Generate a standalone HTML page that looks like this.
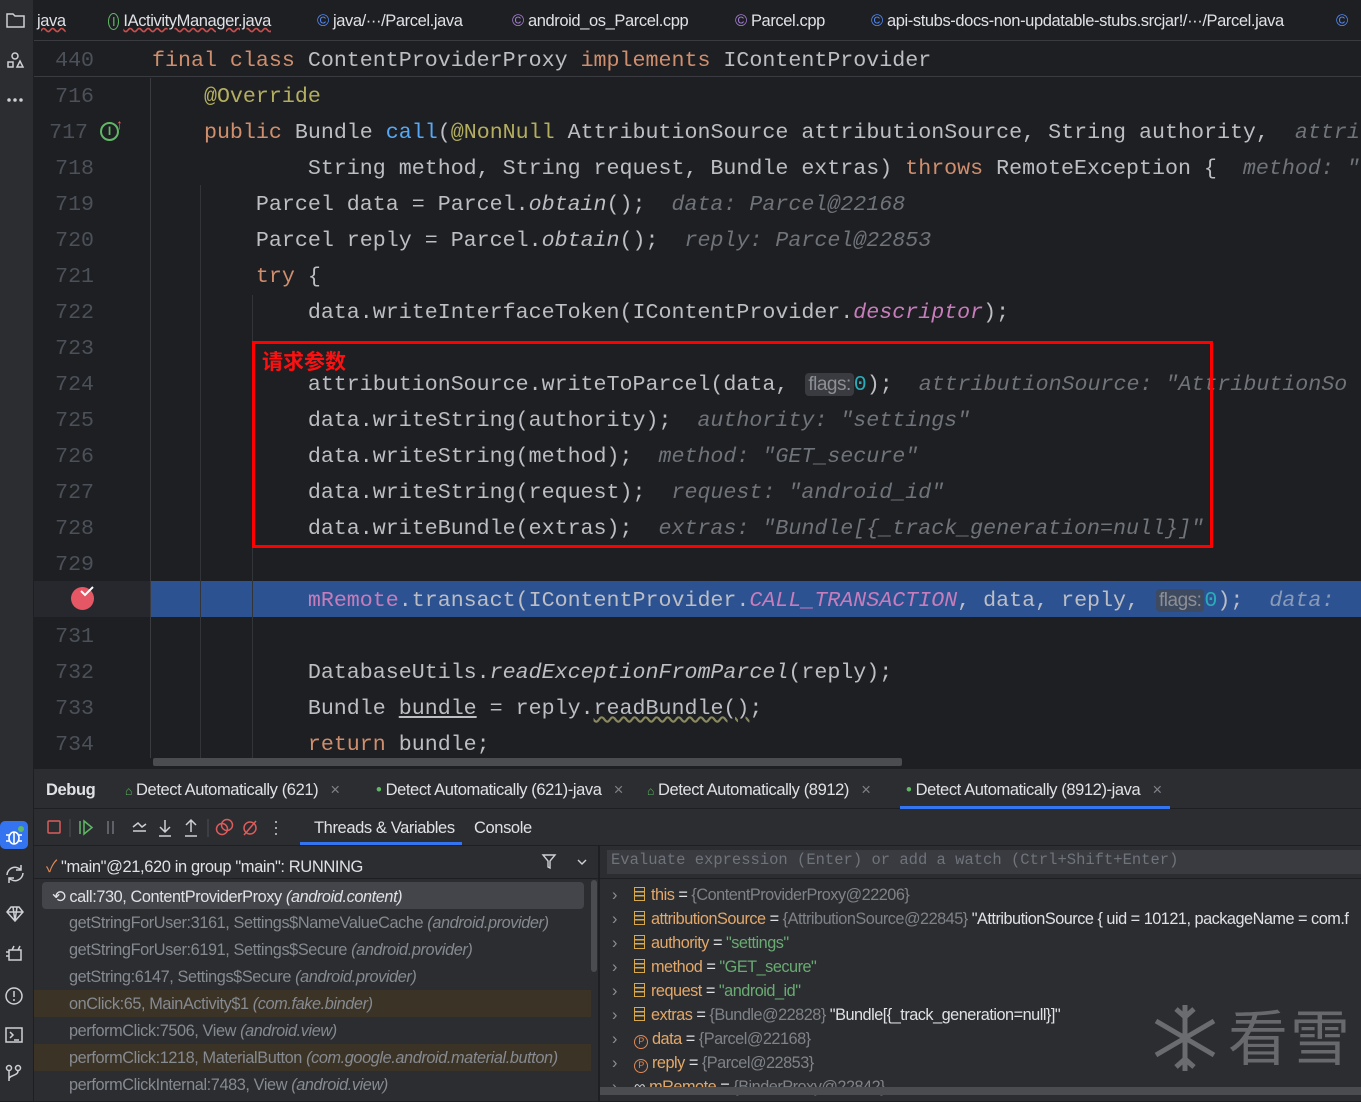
<!DOCTYPE html>
<html><head><meta charset="utf-8"><style>
*{margin:0;padding:0;box-sizing:border-box}
body{width:1361px;height:1101px;background:#1e1f22;overflow:hidden;position:relative;font-family:"Liberation Sans","Noto Sans CJK SC",sans-serif;color:#dfe1e5}
.abs{position:absolute}
.side{left:0;top:0;width:34px;height:1101px;background:#2b2d30;border-right:1px solid #1e1f22}
.tabs{left:34px;top:0;width:1327px;height:41px;background:#1e1f22;border-bottom:1px solid #393b40;font-size:16.5px;letter-spacing:-0.4px;color:#dfe1e5;white-space:nowrap}
.tabs span{position:absolute;top:12px}
.code{font-family:"Liberation Mono",monospace;font-size:21.65px;white-space:pre;color:#bcbec4}
.ln{position:absolute;left:34px;width:60px;text-align:right;font-family:"Liberation Mono",monospace;font-size:21.6px;color:#4b5059;line-height:36px;margin-top:2px}
.cl{position:absolute;left:152px;line-height:36px;height:36px;margin-top:2px}
.k{color:#cf8e6d}.m{color:#56a8f5}.a{color:#b3ae60}.i{font-style:italic}.f{color:#c77dbb}.n{color:#2aacb8}
.h{color:#6f737a;font-style:italic}
.hb{font-family:"Liberation Sans",sans-serif;font-size:19px;background:#393b40;color:#8c8f94;border-radius:4px;padding:1px 3px;letter-spacing:-0.5px;margin-left:4px}
.ui{font-size:16.5px;letter-spacing:-0.4px;white-space:nowrap}
.fr{position:absolute;left:69px;font-size:16.3px;letter-spacing:-0.4px;color:#868a91;white-space:nowrap}
.fr i{color:#868a91}
.vr{position:absolute;left:612px;font-size:16.3px;letter-spacing:-0.5px;white-space:nowrap;color:#dfe1e5}
.vr .nm{color:#e3a869}.vr .g{color:#7f8288}.vr .s{color:#6aab73}.vr .ar{color:#8c8f94;display:inline-block;width:22px}
.ic{display:inline-block;width:11px;height:14px;border:1.5px solid #d8a94a;margin-right:6px;vertical-align:-1px;background:linear-gradient(#d8a94a,#d8a94a) 0 3px/100% 1.5px no-repeat,linear-gradient(#d8a94a,#d8a94a) 0 7px/100% 1.5px no-repeat}
.pi{display:inline-block;width:14px;height:14px;border:1.5px solid #e08855;border-radius:50%;margin-right:4px;font-size:9px;color:#e08855;text-align:center;line-height:11px;vertical-align:0}
</style></head><body>
<div class="abs side"></div>
<svg class="abs" style="left:5px;top:10px" width="22" height="100" viewBox="0 0 22 100" fill="none" stroke="#ced0d6" stroke-width="1.5">
<path d="M2 4h6l2 2h9v11H2z"/>
<circle cx="10" cy="46" r="3"/><rect x="3" y="52" width="5" height="5"/><path d="M12 57l3-6 3 6z"/>
<circle cx="4" cy="90" r="1" fill="#ced0d6"/><circle cx="10" cy="90" r="1" fill="#ced0d6"/><circle cx="16" cy="90" r="1" fill="#ced0d6"/>
</svg>
<div class="abs" style="left:0;top:821px;width:28px;height:28px;background:#3574f0;border-radius:5px"></div>
<svg class="abs" style="left:3px;top:824px" width="24" height="24" viewBox="0 0 24 24" fill="none" stroke="#fff" stroke-width="1.6"><ellipse cx="11" cy="14" rx="5" ry="6"/><path d="M3 11h3M16 11h3M3 17h3M16 17h3M11 8v12"/><circle cx="18" cy="5" r="3" fill="#5fb865" stroke="none"/></svg>
<svg class="abs" style="left:3px;top:862px" width="24" height="240" viewBox="0 0 24 240" fill="none" stroke="#ced0d6" stroke-width="1.5">
<path d="M4 13a8 8 0 0 1 14-5M20 11a8 8 0 0 1-14 5M18 3v5h-5M6 21v-5h5"/>
<path d="M4 50l4-5h8l4 5-8 9zM4 50h16M10 45l2 14 2-14"/>
<path d="M6 88h12v10H6zM3 90h3M3 94h3M9 88l2-4M15 88l2-4"/>
<circle cx="11" cy="134" r="8"/><path d="M11 129v6M11 137v2"/>
<rect x="3" y="166" width="16" height="14"/><path d="M7 170l3 3-3 3M11 178h5"/>
<circle cx="6" cy="206" r="2.5"/><circle cx="15" cy="206" r="2.5"/><path d="M6 209v10M15 209c0 5-9 4-9 8"/>
</svg>

<div class="abs tabs">
<span style="left:3px;text-decoration:underline wavy #c94f4f">java</span>
<span style="left:74px"><span style="position:static;color:#5fb865;font-size:13px;border:1.3px solid #5fb865;border-radius:50%;padding:0 3px">I</span> <span style="position:static;text-decoration:underline wavy #c94f4f">IActivityManager.java</span></span>
<span style="left:283px"><span style="position:static;color:#548af7">©</span> java/···/Parcel.java</span>
<span style="left:478px"><span style="position:static;color:#a57fd6">©</span> android_os_Parcel.cpp</span>
<span style="left:701px"><span style="position:static;color:#a57fd6">©</span> Parcel.cpp</span>
<span style="left:837px"><span style="position:static;color:#548af7">©</span> api-stubs-docs-non-updatable-stubs.srcjar!/···/Parcel.java</span>
<span style="left:1302px;color:#548af7">©</span>
</div>

<div class="abs" style="left:34px;top:41px;width:1327px;height:36px;border-bottom:1px solid #393b40;background:#1e1f22"></div>
<div class="ln" style="top:41px">440</div>
<div class="cl code" style="top:41px"><span class="k">final class</span> ContentProviderProxy <span class="k">implements</span> IContentProvider</div>

<div class="abs" style="left:34px;top:581px;width:116px;height:36px;background:#26282e"></div>
<div class="abs" style="left:150px;top:581px;width:1211px;height:36px;background:#2d5291"></div>
<div class="abs" style="left:150px;top:78px;width:1px;height:680px;background:#393b40"></div>
<div class="abs" style="left:200px;top:185px;width:1px;height:573px;background:#313438"></div>
<div class="abs" style="left:252px;top:295px;width:1px;height:463px;background:#313438"></div>
<div class="abs" style="left:71px;top:587px;width:23px;height:23px;border-radius:50%;background:#e55765"></div>
<svg class="abs" style="left:80px;top:585px" width="14" height="12"><path d="M1 6l4 4 8-8" stroke="#fff" stroke-width="2" fill="none"/></svg>
<div class="abs" style="left:100px;top:122px;width:19px;height:19px;border:2px solid #5fb865;border-radius:50%;color:#5fb865;font-size:12px;text-align:center;line-height:15px;font-weight:bold">I</div>
<div class="abs" style="left:116px;top:116px;color:#e06060;font-size:14px">↑</div>

<div class="ln" style="top:77px">716</div>
<div class="ln" style="top:113px;left:28px">717</div>
<div class="ln" style="top:149px">718</div>
<div class="ln" style="top:185px">719</div>
<div class="ln" style="top:221px">720</div>
<div class="ln" style="top:257px">721</div>
<div class="ln" style="top:293px">722</div>
<div class="ln" style="top:329px">723</div>
<div class="ln" style="top:365px">724</div>
<div class="ln" style="top:401px">725</div>
<div class="ln" style="top:437px">726</div>
<div class="ln" style="top:473px">727</div>
<div class="ln" style="top:509px">728</div>
<div class="ln" style="top:545px">729</div>
<div class="ln" style="top:617px">731</div>
<div class="ln" style="top:653px">732</div>
<div class="ln" style="top:689px">733</div>
<div class="ln" style="top:725px">734</div>

<div class="cl code" style="top:77px">    <span class="a">@Override</span></div>
<div class="cl code" style="top:113px">    <span class="k">public</span> Bundle <span class="m">call</span>(<span class="a">@NonNull</span> AttributionSource attributionSource, String authority,  <span class="h">attri</span></div>
<div class="cl code" style="top:149px">            String method, String request, Bundle extras) <span class="k">throws</span> RemoteException {  <span class="h">method: "</span></div>
<div class="cl code" style="top:185px">        Parcel data = Parcel.<span class="i">obtain</span>();  <span class="h">data: Parcel@22168</span></div>
<div class="cl code" style="top:221px">        Parcel reply = Parcel.<span class="i">obtain</span>();  <span class="h">reply: Parcel@22853</span></div>
<div class="cl code" style="top:257px">        <span class="k">try</span> {</div>
<div class="cl code" style="top:293px">            data.writeInterfaceToken(IContentProvider.<span class="f i">descriptor</span>);</div>
<div class="cl code" style="top:365px">            attributionSource.writeToParcel(data, <span class="hb">flags:</span><span class="n">0</span>);  <span class="h">attributionSource: "AttributionSo</span></div>
<div class="cl code" style="top:401px">            data.writeString(authority);  <span class="h">authority: "settings"</span></div>
<div class="cl code" style="top:437px">            data.writeString(method);  <span class="h">method: "GET_secure"</span></div>
<div class="cl code" style="top:473px">            data.writeString(request);  <span class="h">request: "android_id"</span></div>
<div class="cl code" style="top:509px">            data.writeBundle(extras);  <span class="h">extras: "Bundle[{_track_generation=null}]"</span></div>
<div class="cl code" style="top:581px">            <span class="f">mRemote</span>.transact(IContentProvider.<span class="f i">CALL_TRANSACTION</span>, data, reply, <span class="hb" style="background:#3d4a60">flags:</span><span class="n">0</span>);  <span class="h" style="color:#8a9bb8">data: </span></div>
<div class="cl code" style="top:653px">            DatabaseUtils.<span class="i">readExceptionFromParcel</span>(reply);</div>
<div class="cl code" style="top:689px">            Bundle <span style="text-decoration:underline">bundle</span> = reply.<span style="text-decoration:underline wavy #8a8a60">readBundle()</span>;</div>
<div class="cl code" style="top:725px">            <span class="k">return</span> bundle;</div>

<div class="abs" style="left:252px;top:341px;width:961px;height:207px;border:3px solid #ff0000"></div>
<div class="abs" style="left:262px;top:346px;color:#ff1010;font-size:21px;font-family:'Noto Sans CJK SC',sans-serif;font-weight:bold">请求参数</div>

<div class="abs" style="left:153px;top:758px;width:749px;height:8px;background:#4a4c50;border-radius:2px"></div>

<div class="abs" style="left:34px;top:768px;width:1327px;height:333px;background:#2b2d30;border-top:1px solid #1e1f22"></div>
<div class="abs" style="left:34px;top:808px;width:1327px;height:1px;background:#1e1f22"></div>
<div class="abs ui" style="left:46px;top:781px;font-weight:bold;color:#dfe1e5">Debug</div>
<div class="abs ui" style="left:125px;top:781px"><span style="color:#5fb865;font-size:12px">⌂</span> Detect Automatically (621) <span style="color:#7f8288;margin-left:8px">×</span></div>
<div class="abs ui" style="left:376px;top:781px"><span style="color:#5fb865">•</span> Detect Automatically (621)-java <span style="color:#7f8288;margin-left:8px">×</span></div>
<div class="abs ui" style="left:647px;top:781px"><span style="color:#5fb865;font-size:12px">⌂</span> Detect Automatically (8912) <span style="color:#7f8288;margin-left:8px">×</span></div>
<div class="abs ui" style="left:906px;top:781px"><span style="color:#5fb865">•</span> Detect Automatically (8912)-java <span style="color:#7f8288;margin-left:8px">×</span></div>
<div class="abs" style="left:900px;top:806px;width:270px;height:3px;background:#3574f0"></div>

<svg class="abs" style="left:44px;top:817px" width="245" height="22" viewBox="0 0 245 22" fill="none" stroke-width="1.5">
<rect x="4" y="4" width="12" height="12" rx="1" stroke="#db5c5c"/>
<path d="M26 2v18" stroke="#43454a"/>
<path d="M36 4v13M40 4v13l8-6.5z" stroke="#5fb865"/>
<path d="M64 4v13M69 4v13" stroke="#6f737a"/>
<path d="M89 14h13M89 10l5-4 4 4 4-3" stroke="#ced0d6"/>
<path d="M121 3v12M116 10l5 5 5-5M115 19h12" stroke="#ced0d6"/>
<path d="M147 15V4M142 8l5-5 5 5M141 19h12" stroke="#ced0d6"/>
<path d="M164 2v18" stroke="#43454a"/>
<circle cx="178" cy="12" r="5.5" stroke="#db5c5c"/><circle cx="183" cy="8" r="5.5" stroke="#db5c5c"/>
<circle cx="206" cy="11" r="6" stroke="#db5c5c"/><path d="M200 18l12-14" stroke="#db5c5c"/>
<circle cx="232" cy="5" r="1" fill="#ced0d6" stroke="none"/><circle cx="232" cy="11" r="1" fill="#ced0d6" stroke="none"/><circle cx="232" cy="17" r="1" fill="#ced0d6" stroke="none"/>
</svg>
<div class="abs ui" style="left:314px;top:819px;color:#dfe1e5">Threads &amp; Variables</div>
<div class="abs ui" style="left:474px;top:819px;color:#dfe1e5">Console</div>
<div class="abs" style="left:300px;top:842px;width:162px;height:3px;background:#3574f0"></div>
<div class="abs" style="left:34px;top:845px;width:1327px;height:1px;background:#1e1f22"></div>

<div class="abs ui" style="left:46px;top:853px"><span style="color:#e08855">✓</span> "main"@21,620 in group "main": RUNNING</div>
<svg class="abs" style="left:541px;top:853px" width="50" height="18" fill="none" stroke="#ced0d6" stroke-width="1.4"><path d="M2 2h12l-5 6v7l-2-1V8z"/><path d="M37 7l4 4 4-4"/></svg>
<div class="abs" style="left:34px;top:878px;width:564px;height:1px;background:#1e1f22"></div>
<div class="abs" style="left:598px;top:845px;width:2px;height:256px;background:#1e1f22"></div>
<div class="abs" style="left:42px;top:882px;width:542px;height:27px;background:#43454a;border-radius:4px"></div>
<div class="abs" style="left:34px;top:990px;width:557px;height:27px;background:#3b3325"></div>
<div class="abs" style="left:34px;top:1044px;width:557px;height:27px;background:#3b3325"></div>
<div class="abs" style="left:591px;top:880px;width:6px;height:92px;background:#4a4c50;border-radius:3px"></div>
<div class="fr" style="left:52px;top:887px;color:#dfe1e5">⟲ call:730, ContentProviderProxy <i style="color:#dfe1e5">(android.content)</i></div>
<div class="fr" style="top:914px">getStringForUser:3161, Settings$NameValueCache <i>(android.provider)</i></div>
<div class="fr" style="top:941px">getStringForUser:6191, Settings$Secure <i>(android.provider)</i></div>
<div class="fr" style="top:968px">getString:6147, Settings$Secure <i>(android.provider)</i></div>
<div class="fr" style="top:995px">onClick:65, MainActivity$1 <i>(com.fake.binder)</i></div>
<div class="fr" style="top:1022px">performClick:7506, View <i>(android.view)</i></div>
<div class="fr" style="top:1049px">performClick:1218, MaterialButton <i>(com.google.android.material.button)</i></div>
<div class="fr" style="top:1076px">performClickInternal:7483, View <i>(android.view)</i></div>

<div class="abs" style="left:607px;top:850px;width:754px;height:24px;background:#393b40"></div>
<div class="abs" style="left:611px;top:851px;font-family:'Liberation Mono',monospace;font-size:15.5px;color:#6f737a;white-space:nowrap">Evaluate expression (Enter) or add a watch (Ctrl+Shift+Enter)</div>
<div class="abs" style="left:600px;top:878px;width:761px;height:1px;background:#1e1f22"></div>
<div class="vr" style="top:886px"><span class="ar">›</span><span class="ic"></span><span class="nm">this</span> = <span class="g">{ContentProviderProxy@22206}</span></div>
<div class="vr" style="top:910px"><span class="ar">›</span><span class="ic"></span><span class="nm">attributionSource</span> = <span class="g">{AttributionSource@22845}</span> "AttributionSource { uid = 10121, packageName = com.f</div>
<div class="vr" style="top:934px"><span class="ar">›</span><span class="ic"></span><span class="nm">authority</span> = <span class="s">"settings"</span></div>
<div class="vr" style="top:958px"><span class="ar">›</span><span class="ic"></span><span class="nm">method</span> = <span class="s">"GET_secure"</span></div>
<div class="vr" style="top:982px"><span class="ar">›</span><span class="ic"></span><span class="nm">request</span> = <span class="s">"android_id"</span></div>
<div class="vr" style="top:1006px"><span class="ar">›</span><span class="ic"></span><span class="nm">extras</span> = <span class="g">{Bundle@22828}</span> "Bundle[{_track_generation=null}]"</div>
<div class="vr" style="top:1030px"><span class="ar">›</span><span class="pi">P</span><span class="nm">data</span> = <span class="g">{Parcel@22168}</span></div>
<div class="vr" style="top:1054px"><span class="ar">›</span><span class="pi">P</span><span class="nm">reply</span> = <span class="g">{Parcel@22853}</span></div>
<div class="vr" style="top:1078px"><span class="ar">›</span><span style="color:#ced0d6;margin-right:4px">∞</span><span class="nm">mRemote</span> = <span class="g">{BinderProxy@22842}</span></div>
<div class="abs" style="left:600px;top:1087px;width:761px;height:8px;background:#4a4c50"></div>

<svg class="abs" style="left:1152px;top:1003px" width="66" height="70" viewBox="0 0 66 70" fill="none" stroke="#6a6c70" stroke-width="5"><path d="M33 2v66M4 18l58 34M4 52l58-34M24 6l9 8 9-8M24 64l9-8 9 8"/></svg>
<div class="abs" style="left:1228px;top:1000px;font-family:'Noto Sans CJK SC',sans-serif;font-size:60px;color:#68696c;line-height:70px;letter-spacing:2px">看雪</div>
</body></html>
